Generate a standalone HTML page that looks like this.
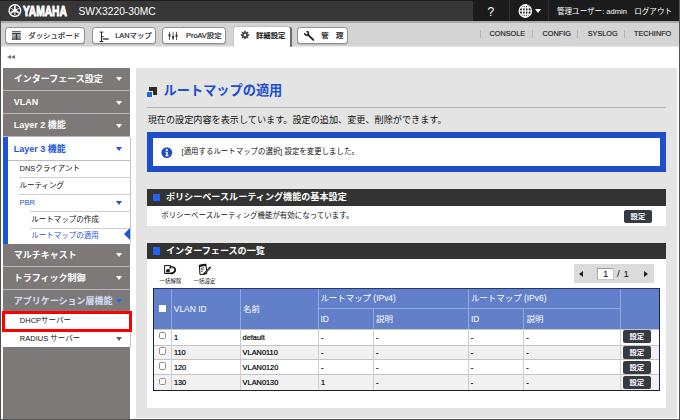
<!DOCTYPE html>
<html lang="ja">
<head>
<meta charset="utf-8">
<title>ルートマップの適用</title>
<style>
*{box-sizing:border-box;margin:0;padding:0}
html,body{width:680px;height:420px;overflow:hidden;background:#fff}
body{font-family:"Liberation Sans","Noto Sans CJK JP",sans-serif;color:#222;position:relative;font-size:7.4px;line-height:1}
.abs{position:absolute}
.t{position:absolute;white-space:nowrap;line-height:1}
#frameL{left:0;top:21px;width:1.3px;height:399px;background:#505050}
#frameR{left:679px;top:0;width:1px;height:420px;background:#555}
#frameB{left:0;top:418.5px;width:680px;height:1.5px;background:#555}
/* header */
#hdr{left:0;top:0;width:680px;height:21px;background:#373737;border-top:1px solid #1d1d1d}
#hdrR{left:473px;top:0;width:207px;height:21px;background:#1b1b1b}
.hsep{top:0;width:1px;height:21px;background:#303030}
/* nav */
#nav{left:0;top:21px;width:680px;height:25.6px;background:#d4d4d4;border-top:2.2px solid #a9a9a9;border-bottom:1px solid #e8e8e8}
.nb{position:absolute;top:27px;height:17.3px;background:#fff;border:1px solid #8f8f8f;border-radius:3.5px;box-shadow:0 0.5px 0.5px rgba(0,0,0,.25)}
.nb .t{top:4.2px;font-size:7.4px;color:#222;-webkit-text-stroke:.18px #222}
#tab{left:233.5px;top:26.6px;width:56.6px;height:20.4px;background:#fff;border-radius:2px 2px 0 0;box-shadow:1.6px 0 0.8px rgba(0,0,0,.5), -0.5px -0.5px 0.5px rgba(0,0,0,.12);clip-path:inset(-3px -4px 0 -3px)}
.nl{top:29.9px;font-size:7.3px;color:#1a1a1a;-webkit-text-stroke:.15px #1a1a1a}
.nsep{top:29.6px;width:1px;height:8px;background:#b4b4b4}
/* sidebar */
#side{left:3px;top:68.2px;width:127px;height:350.8px;background:#7d7979}
.mi{position:absolute;left:3px;width:127px;height:23px;background:#7d7979;border-bottom:1px solid #b9b6b6}
.mi .t{left:10.8px;top:7.3px;font-size:9px;font-weight:bold;color:#fff}
.arr{position:absolute;width:0;height:0;border-left:3.1px solid transparent;border-right:3.1px solid transparent;border-top:4.9px solid #fff}
.sub{position:absolute;background:#fff}
.sub .t{font-size:7.4px;color:#222}
.sl{position:absolute;height:1px;background:#d0d0d0}
/* main */
#panel{left:136px;top:68.2px;width:540.7px;height:349.9px;background:#e4e4e4}
.sec{position:absolute;left:146.7px;width:519.5px;background:#333}
.sec .t{left:19.2px;font-size:9.1px;font-weight:bold;color:#fff}
.sq{position:absolute;left:6.2px;width:7.4px;height:7.5px;background:#2463f0}
.body{position:absolute;left:146.7px;width:519.5px;background:#fff}
.btn{position:absolute;background:#353a43;border-radius:2px;color:#fff;font-weight:bold;font-size:7.4px;text-align:center;width:27.7px;height:13.2px;line-height:13px}
/* table */
#th{left:153.0px;top:288.3px;width:507.3px;height:40.6px;background:#6180c9}
.hc{position:absolute;color:#fff;font-size:8.45px;white-space:nowrap;line-height:1}
.vl{position:absolute;width:1px;background:#93a8dc}
.row{position:absolute;left:153.0px;width:507.3px;border-top:1px solid #c4c4c4}
.row.alt{background:#f1f1f1}
.c{position:absolute;font-size:7.4px;color:#000;white-space:nowrap;line-height:1;-webkit-text-stroke:.2px #000}
.cb{position:absolute;width:7.3px;height:7.3px;border:1px solid #8e8e8e;border-radius:1.8px;background:#fff}
.rv{position:absolute;top:0;width:1px;height:15.4px;background:#d0d0d0}
</style>
</head>
<body>
<!-- header -->
<div id="hdr" class="abs"></div>
<div id="hdrR" class="abs"></div>
<div class="abs hsep" style="left:509px"></div>
<div class="abs hsep" style="left:548px"></div>
<svg class="abs" style="left:8px;top:4px" width="14" height="14" viewBox="0 0 14 14">
 <circle cx="6.9" cy="6.6" r="5.8" fill="none" stroke="#fff" stroke-width="1.4"/>
 <g stroke="#fff" stroke-linecap="butt">
  <line x1="6.9" y1="7.2" x2="6.9" y2="1.6" stroke-width="1.7"/><line x1="6.9" y1="6.6" x2="2.6" y2="9.1" stroke-width="1.7"/><line x1="6.9" y1="6.6" x2="11.2" y2="9.1" stroke-width="1.7"/>
  <line x1="6.9" y1="6.6" x2="6.9" y2="11" stroke-width="1"/><line x1="6.9" y1="6.6" x2="3.1" y2="4.4" stroke-width="1"/><line x1="6.9" y1="6.6" x2="10.7" y2="4.4" stroke-width="1"/>
 </g>
 <circle cx="6.9" cy="6.6" r="1.7" fill="#fff"/>
</svg>
<svg class="abs" style="left:22px;top:3px" width="48" height="16" viewBox="0 0 48 16"><text x="0.9" y="12.85" font-family="Liberation Sans, sans-serif" font-weight="bold" font-size="14.3" fill="#fff" stroke="#fff" stroke-width="1" stroke-linejoin="round" textLength="44" lengthAdjust="spacingAndGlyphs">YAMAHA</text></svg>
<div class="t" style="left:78.5px;top:6.7px;font-size:10.3px;color:#fff">SWX3220-30MC</div>
<div class="t" style="left:487.5px;top:6px;font-size:12px;color:#fff">?</div>
<svg class="abs" style="left:517.5px;top:4px" width="15" height="15" viewBox="0 0 15 15" fill="none" stroke="#fff" stroke-width="1.25">
 <circle cx="7.3" cy="7" r="6.2"/><ellipse cx="7.3" cy="7" rx="2.9" ry="6.3"/><line x1="7.3" y1=".7" x2="7.3" y2="13.3"/><line x1="1" y1="7" x2="13.6" y2="7"/><line x1="2" y1="3.8" x2="12.6" y2="3.8"/><line x1="2" y1="10.2" x2="12.6" y2="10.2"/>
</svg>
<div class="arr" style="left:534.6px;top:9.2px;border-left-width:3px;border-right-width:3px;border-top-width:4.2px"></div>
<div class="t" style="left:557px;top:7.5px;font-size:7.55px;color:#fff">管理ユーザー: admin</div>
<div class="t" style="left:634.2px;top:7.5px;font-size:7.6px;color:#fff">ログアウト</div>

<!-- nav -->
<div id="nav" class="abs"></div>
<div class="nb" style="left:5px;width:79.5px"><div class="t" style="left:22.3px">ダッシュボード</div>
<svg class="abs" style="left:5px;top:1.6px" width="11" height="11" viewBox="0 0 11 11"><defs><linearGradient id="dg" x1="0" y1="0" x2="0" y2="1"><stop offset="0" stop-color="#e2e2e2"/><stop offset="1" stop-color="#6a6a6a"/></linearGradient></defs><rect x="1" y="1" width="8.8" height="9" fill="url(#dg)"/><rect x="1" y="1" width="8.8" height=".9" fill="#5a5a5a"/><rect x="1" y="3" width="8.8" height="1.1" fill="#3c3c3c"/><rect x="4.8" y="3" width="1.3" height="7" fill="#3c3c3c"/><rect x="1" y="9.2" width="1" height=".8" fill="#333"/><rect x="8.8" y="9.2" width="1" height=".8" fill="#333"/></svg></div>
<div class="nb" style="left:91.5px;width:64.5px"><div class="t" style="left:22.7px">LANマップ</div>
<svg class="abs" style="left:5px;top:2.5px" width="13" height="12" viewBox="0 0 13 12" stroke="#222" fill="none"><path d="M3.5 1v9.6" stroke-width="1"/><path d="M1.6 1.1h3.8M1.6 10.5h3.8M3.5 5.6h2.2" stroke-width=".9"/><path d="M4.8 8h5.8" stroke-width="1.3"/></svg></div>
<div class="nb" style="left:162.2px;width:63.8px"><div class="t" style="left:22.8px">ProAV設定</div>
<svg class="abs" style="left:3.6px;top:2.6px" width="13" height="11" viewBox="0 0 13 11" stroke="#333" fill="none"><path d="M2.5 .8v8.2M6.1 .8v8.2M9.5 .8v8.2" stroke-width=".8"/><path d="M2.5 3v2.6M6.1 5v2.6M9.5 3.4v2.6" stroke-width="1.9"/></svg></div>
<div id="tab" class="abs"></div>
<svg class="abs" style="left:239.8px;top:30.1px" width="10" height="10" viewBox="-5.5 -5.5 11 11"><g fill="#444"><circle r="3.1"/><g id="tt"><rect x="-.9" y="-4.6" width="1.8" height="9.2"/></g><use href="#tt" transform="rotate(45)"/><use href="#tt" transform="rotate(90)"/><use href="#tt" transform="rotate(135)"/></g><circle r="1.3" fill="#fff"/></svg>
<div class="t" style="left:256px;top:32.2px;font-size:7.35px;font-weight:bold;color:#111">詳細設定</div>
<div class="nb" style="left:297.3px;width:50.3px"><div class="t" style="left:22.9px;font-weight:500">管</div><div class="t" style="left:37.7px;font-weight:500">理</div>
<svg class="abs" style="left:5.5px;top:2.5px" width="12" height="12" viewBox="0 0 12 12"><path d="M3.9 3.6L9.3 8.9" stroke="#1c1c1c" stroke-width="1.9" stroke-linecap="round" fill="none"/><path d="M2.43 .41A1.9 1.9 0 1 1 .71 2.13" stroke="#1c1c1c" stroke-width="1.5" fill="none"/><circle cx="9.3" cy="8.9" r=".45" fill="#ddd"/></svg></div>

<div class="abs nsep" style="left:479.5px"></div>
<div class="t nl" style="left:489.5px">CONSOLE</div>
<div class="abs nsep" style="left:532px"></div>
<div class="t nl" style="left:542.5px">CONFIG</div>
<div class="abs nsep" style="left:577px"></div>
<div class="t nl" style="left:587.7px">SYSLOG</div>
<div class="abs nsep" style="left:623.5px"></div>
<div class="t nl" style="left:634px">TECHINFO</div>

<!-- collapse icon -->
<div class="abs" style="left:6.8px;top:54.8px;width:0;height:0;border-top:2.6px solid transparent;border-bottom:2.6px solid transparent;border-right:4.3px solid #707070"></div>
<div class="abs" style="left:11px;top:54.8px;width:0;height:0;border-top:2.6px solid transparent;border-bottom:2.6px solid transparent;border-right:4.3px solid #707070"></div>

<!-- sidebar -->
<div id="side" class="abs"></div>
<div class="mi" style="top:68.2px"><div class="t">インターフェース設定</div><div class="arr" style="left:113.2px;top:9px"></div></div>
<div class="mi" style="top:91.3px"><div class="t" style="top:6.3px">VLAN</div><div class="arr" style="left:113.2px;top:9.4px"></div></div>
<div class="mi" style="top:114.4px"><div class="t" style="top:6.3px">Layer 2 機能</div><div class="arr" style="left:113.2px;top:9.6px"></div></div>
<!-- Layer 3 group -->
<div class="sub" style="left:3px;top:137.4px;width:127px;height:106.5px"></div>
<div class="abs" style="left:3px;top:137.4px;width:5.4px;height:106.5px;background:#1c54dc"></div>
<div class="t" style="left:13.8px;top:144.6px;font-size:9px;font-weight:bold;color:#1c54dc">Layer 3 機能</div>
<div class="arr" style="left:116.2px;top:147px;border-top-color:#1c54dc"></div>
<div class="sl" style="left:8.3px;top:159.5px;width:121.7px;background:#bdbdbd"></div>
<div class="t" style="left:19.5px;top:164.5px;font-size:7.5px;color:#111">DNSクライアント</div>
<div class="sl" style="left:19px;top:177px;width:111px"></div>
<div class="t" style="left:19.5px;top:182px;font-size:7.5px;color:#111">ルーティング</div>
<div class="sl" style="left:19px;top:194.2px;width:111px"></div>
<div class="t" style="left:19.5px;top:199.3px;font-size:7.5px;color:#1c54dc">PBR</div>
<div class="arr" style="left:116.2px;top:201px;border-top-color:#1c54dc"></div>
<div class="sl" style="left:30px;top:211px;width:100px"></div>
<div class="t" style="left:31.2px;top:216.2px;font-size:7.5px;color:#111">ルートマップの作成</div>
<div class="sl" style="left:30px;top:227.7px;width:100px"></div>
<div class="t" style="left:31.2px;top:231.6px;font-size:7.5px;color:#1c54dc">ルートマップの適用</div>
<div class="abs" style="left:129.5px;top:137.4px;width:1px;height:106.5px;background:#c6c6c6"></div>
<div class="abs" style="left:124.2px;top:228.3px;width:0;height:0;border-top:6.9px solid transparent;border-bottom:6.9px solid transparent;border-right:6.2px solid #1c54dc"></div>

<div class="mi" style="top:243.9px"><div class="t">マルチキャスト</div><div class="arr" style="left:113.2px;top:9px"></div></div>
<div class="mi" style="top:266.8px"><div class="t">トラフィック制御</div><div class="arr" style="left:113.2px;top:9px"></div></div>
<div class="mi" style="top:289.7px;border-bottom:none;height:21.5px"><div class="t" style="color:#d4e0f8">アプリケーション層機能</div><div class="arr" style="left:113.2px;top:9px;border-top-color:#2468ee"></div></div>
<div class="sub" style="left:3px;top:311px;width:127px;height:35.8px"></div>
<div class="abs" style="left:129.5px;top:331px;width:1px;height:15.8px;background:#c6c6c6"></div>
<div class="abs" style="left:1.8px;top:311px;width:130.3px;height:20.5px;border:3px solid #fe0000;background:#fff"></div>
<div class="t" style="left:19.8px;top:317.4px;font-size:7.5px;color:#111">DHCPサーバー</div>
<div class="t" style="left:19.8px;top:334.8px;font-size:7.5px;color:#111">RADIUS サーバー</div>
<div class="arr" style="left:116.2px;top:337.3px;border-top-color:#5f5f5f"></div>

<!-- main panel -->
<div id="panel" class="abs"></div>
<div class="abs" style="left:148.6px;top:87px;width:8.7px;height:8px;background:#2a2a2a"></div>
<div class="abs" style="left:146.1px;top:90.6px;width:7.1px;height:7px;background:#1f63e8;border:.8px solid #fff;border-left-color:#e4e4e4;border-bottom-color:#e4e4e4"></div>
<div class="t" style="left:163.6px;top:84px;font-size:13.2px;font-weight:bold;color:#1a4fd2">ルートマップの適用</div>
<div class="abs" style="left:147px;top:106.5px;width:519px;height:1px;background:#b5b5b5"></div>
<div class="t" style="left:147.7px;top:116px;font-size:9.15px;color:#111">現在の設定内容を表示しています。設定の追加、変更、削除ができます。</div>

<div class="abs" style="left:147px;top:132px;width:518.8px;height:39.8px;border:6px solid #1f4fc8;background:#fff"></div>
<svg class="abs" style="left:160.7px;top:146.6px" width="12" height="12" viewBox="0 0 12 12"><circle cx="5.8" cy="5.6" r="5.4" fill="#1f4fc8"/><circle cx="5.8" cy="2.9" r="1.05" fill="#fff"/><path d="M4.5 4.8h2.2v3.5h.9v1H4.3v-1h.9V5.8h-.7z" fill="#fff"/></svg>
<div class="t" style="left:181.6px;top:147.9px;font-size:7.45px;color:#111">[適用するルートマップの選択] 設定を変更しました。</div>

<div class="sec" style="top:189px;height:16.5px"><div class="sq" style="top:4.7px"></div><div class="t" style="top:4.1px">ポリシーベースルーティング機能の基本設定</div></div>
<div class="body" style="top:205.5px;height:20.2px"></div>
<div class="t" style="left:161.2px;top:212.2px;font-size:7.48px;color:#111">ポリシーベースルーティング機能が有効になっています。</div>
<div class="btn" style="left:624.1px;top:209.6px">設定</div>

<div class="sec" style="top:243.1px;height:16.3px"><div class="sq" style="top:4.4px"></div><div class="t" style="top:3.9px">インターフェースの一覧</div></div>
<div class="body" style="top:259.4px;height:148.6px"></div>

<!-- bulk icons -->
<svg class="abs" style="left:163px;top:264px" width="14" height="11" viewBox="0 0 14 11">
 <path d="M1.6 1.6h6.2v2M1.6 1.6v7.9h6" fill="none" stroke="#111" stroke-width="1"/>
 <path d="M3 6.6l1.2-1.6h2.6v3.4H3z" fill="#222"/>
 <path d="M7.2 3.5c3.6-1 5.8 1 4.8 3.4c-.7 1.7-2.6 2.6-4.6 2.5" fill="none" stroke="#111" stroke-width="1.9" stroke-linecap="round"/>
 <path d="M8.2 3.9c2-.5 3.1.6 2.7 2" fill="none" stroke="#fff" stroke-width=".7"/>
</svg>
<div class="t" style="left:159.6px;top:278.6px;font-size:5.5px;color:#111">一括解除</div>
<svg class="abs" style="left:197px;top:262.5px" width="15" height="13" viewBox="0 0 15 13">
 <path d="M2.3 2.2l6.6-1.1l.9 9.6l-6.8 1z" fill="#fff" stroke="#111" stroke-width="1"/>
 <path d="M2.2 2.2l6.8-1.2l.2 1.7l-6.8 1.2z" fill="#111"/>
 <path d="M3.7 5.3l3.6-.6M3.9 6.9l2.6-.4M4 8.5l1.8-.3" stroke="#333" stroke-width=".8" fill="none"/>
 <path d="M13 4.6L7.4 10.6" stroke="#111" stroke-width="1.9" stroke-linecap="round"/>
 <path d="M12.5 5.1L8 9.9" stroke="#bbb" stroke-width=".5"/>
 <path d="M6.3 11.6l.6-1.9l1.3 1.2z" fill="#111"/>
</svg>
<div class="t" style="left:193.4px;top:278.6px;font-size:5.5px;color:#111">一括設定</div>

<!-- pager -->
<div class="abs" style="left:573.5px;top:264.1px;width:80.9px;height:18.8px;background:#dbdbdb"></div>
<div class="abs" style="left:579.3px;top:271.4px;width:0;height:0;border-top:3px solid transparent;border-bottom:3px solid transparent;border-right:4.9px solid #222"></div>
<div class="abs" style="left:597px;top:267.9px;width:17.3px;height:11.9px;background:#fff;border:1px solid #c8c8c8;border-top-color:#9a9a9a;border-left-color:#aaa"></div>
<div class="t" style="left:602.9px;top:269.3px;font-size:9.7px;color:#111">1</div>
<div class="t" style="left:616.9px;top:269.3px;font-size:9.7px;color:#111;word-spacing:1.2px">/ 1</div>
<div class="abs" style="left:644.4px;top:271.4px;width:0;height:0;border-top:3px solid transparent;border-bottom:3px solid transparent;border-left:4.9px solid #222"></div>

<!-- table -->
<div class="abs" style="left:153.0px;top:288.3px;width:507.3px;height:102.7px;background:#fff"></div>
<div id="th" class="abs"></div>
<div class="vl" style="left:170.7px;top:289.3px;height:39.6px"></div>
<div class="vl" style="left:240.0px;top:289.3px;height:39.6px"></div>
<div class="vl" style="left:318.0px;top:289.3px;height:39.6px"></div>
<div class="vl" style="left:373.0px;top:308.3px;height:20.6px"></div>
<div class="vl" style="left:467.8px;top:289.3px;height:39.6px"></div>
<div class="vl" style="left:523.1px;top:308.3px;height:20.6px"></div>
<div class="vl" style="left:620.2px;top:289.3px;height:39.6px"></div>
<div class="abs" style="left:318.5px;top:307.8px;width:302.2px;height:1px;background:#93a8dc"></div>
<div class="abs" style="left:158.9px;top:304.9px;width:6.9px;height:6.9px;background:#fff;border-radius:.6px"></div>
<div class="hc" style="left:173.8px;top:304.6px">VLAN ID</div>
<div class="hc" style="left:243.0px;top:304.6px">名前</div>
<div class="hc" style="left:320.4px;top:294.3px">ルートマップ (IPv4)</div>
<div class="hc" style="left:471px;top:294.3px">ルートマップ (IPv6)</div>
<div class="hc" style="left:320.4px;top:314.6px">ID</div>
<div class="hc" style="left:376.0px;top:314.6px">説明</div>
<div class="hc" style="left:471px;top:314.6px">ID</div>
<div class="hc" style="left:526.5px;top:314.6px">説明</div>
<div class="row" style="top:328.9px;height:15.6px"></div>
<div class="c" style="left:173.9px;top:333.9px">1</div>
<div class="c" style="left:242.6px;top:333.9px">default</div>
<div class="c" style="left:321.0px;top:333.9px">-</div>
<div class="c" style="left:376.0px;top:333.9px">-</div>
<div class="c" style="left:470.8px;top:333.9px">-</div>
<div class="c" style="left:526.2px;top:333.9px">-</div>
<div class="cb" style="left:158.6px;top:332.2px"></div>
<div class="btn" style="left:623px;top:330.2px">設定</div>
<div class="row alt" style="top:344.5px;height:14.9px"></div>
<div class="c" style="left:173.9px;top:348.7px">110</div>
<div class="c" style="left:242.6px;top:348.7px">VLAN0110</div>
<div class="c" style="left:321.0px;top:348.7px">-</div>
<div class="c" style="left:376.0px;top:348.7px">-</div>
<div class="c" style="left:470.8px;top:348.7px">-</div>
<div class="c" style="left:526.2px;top:348.7px">-</div>
<div class="cb" style="left:158.6px;top:347.4px"></div>
<div class="btn" style="left:623px;top:345.8px">設定</div>
<div class="row" style="top:359.4px;height:15.0px"></div>
<div class="c" style="left:173.9px;top:363.8px">120</div>
<div class="c" style="left:242.6px;top:363.8px">VLAN0120</div>
<div class="c" style="left:321.0px;top:363.8px">-</div>
<div class="c" style="left:376.0px;top:363.8px">-</div>
<div class="c" style="left:470.8px;top:363.8px">-</div>
<div class="c" style="left:526.2px;top:363.8px">-</div>
<div class="cb" style="left:158.6px;top:362.4px"></div>
<div class="btn" style="left:623px;top:360.7px">設定</div>
<div class="row alt" style="top:374.4px;height:15.7px"></div>
<div class="c" style="left:173.9px;top:379.0px">130</div>
<div class="c" style="left:242.6px;top:379.0px">VLAN0130</div>
<div class="c" style="left:321.0px;top:379.0px">1</div>
<div class="c" style="left:376.0px;top:379.0px">-</div>
<div class="c" style="left:470.8px;top:379.0px">-</div>
<div class="c" style="left:526.2px;top:379.0px">-</div>
<div class="cb" style="left:158.6px;top:377.7px"></div>
<div class="btn" style="left:623px;top:375.7px">設定</div>
<div class="abs" style="left:170.7px;top:328.9px;width:1px;height:61.2px;background:#cdcdcd"></div>
<div class="abs" style="left:240.0px;top:328.9px;width:1px;height:61.2px;background:#cdcdcd"></div>
<div class="abs" style="left:318.0px;top:328.9px;width:1px;height:61.2px;background:#cdcdcd"></div>
<div class="abs" style="left:373.0px;top:328.9px;width:1px;height:61.2px;background:#cdcdcd"></div>
<div class="abs" style="left:467.8px;top:328.9px;width:1px;height:61.2px;background:#cdcdcd"></div>
<div class="abs" style="left:523.1px;top:328.9px;width:1px;height:61.2px;background:#cdcdcd"></div>
<div class="abs" style="left:620.2px;top:328.9px;width:1px;height:61.2px;background:#cdcdcd"></div>
<div class="abs" style="left:153.0px;top:288.3px;width:1.1px;height:102.7px;background:#1b2750"></div>
<div class="abs" style="left:659.3px;top:288.3px;width:1px;height:102.7px;background:#1b2750"></div>
<div class="abs" style="left:153.0px;top:390.1px;width:507.3px;height:1px;background:#222"></div>
<div class="abs" style="left:153.0px;top:288.3px;width:507.3px;height:1px;background:#27376e"></div>

<div id="frameL" class="abs"></div>
<div id="frameR" class="abs"></div>
<div id="frameB" class="abs"></div>
</body>
</html>
